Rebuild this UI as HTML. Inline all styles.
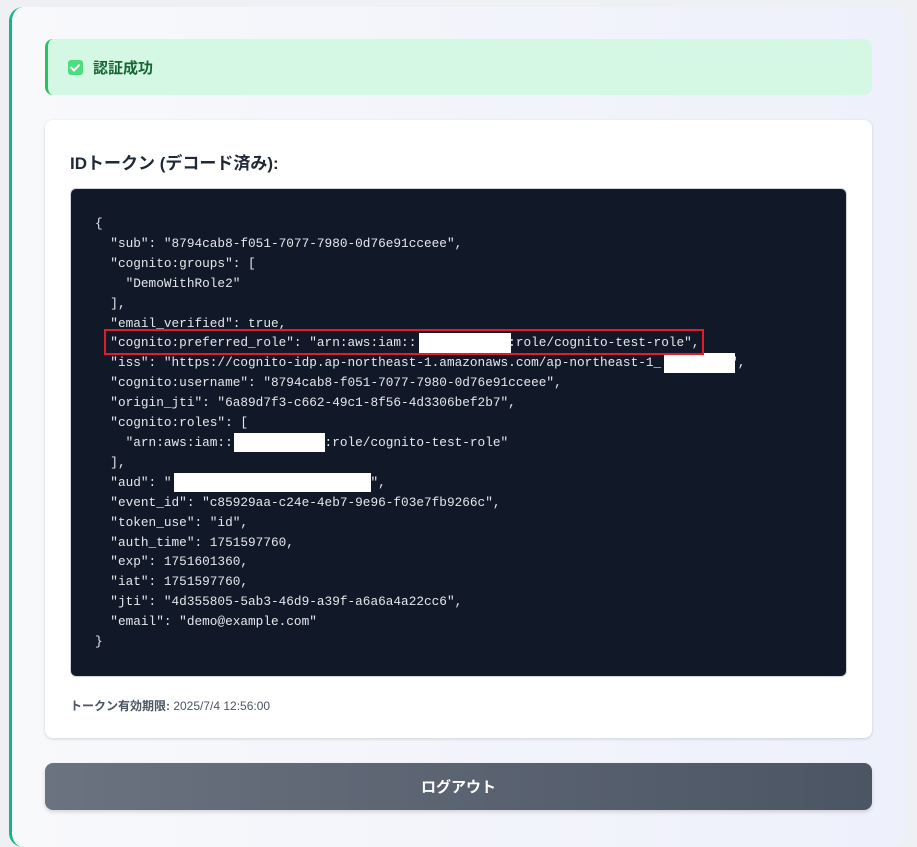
<!DOCTYPE html>
<html><head><meta charset="utf-8"><style>
*{box-sizing:border-box;margin:0;padding:0}
body{width:917px;height:828px;overflow:hidden;background:#eef0f3;font-family:"Liberation Sans","Noto Sans CJK JP",sans-serif;position:relative}
.main{position:absolute;left:9px;top:7px;width:896px;height:840px;border-radius:14px;background:linear-gradient(90deg,#f8f9fb,#eef0fb);border-left:3px solid #10b981}
.ok{position:absolute;left:45px;top:39px;width:827px;height:56px;border-radius:8px;background:#d5f8e4;border-left:3px solid #22c55e;display:flex;align-items:center;padding-left:20px;color:#166534;font-weight:bold;font-size:15px}
.chk{width:15px;height:15px;border-radius:3px;background:#4ade80;margin-right:10px;position:relative}
.chk:after{content:"";position:absolute;left:4px;top:2px;width:4px;height:7px;border:solid #fff;border-width:0 2px 2px 0;transform:rotate(45deg)}
.card{position:absolute;left:45px;top:120px;width:827px;height:618px;border-radius:8px;background:#fff;box-shadow:0 1px 3px rgba(0,0,0,.15)}
h2{position:absolute;left:25px;top:29px;font-size:17px;color:#1f2937;font-weight:bold}
.code{position:absolute;left:25px;top:68px;width:777px;height:489px;border-radius:6px;background:#111827;border:1px solid #d1d5db}
pre{position:absolute;left:24px;top:25px;font-family:"Liberation Mono",monospace;font-size:12.75px;line-height:19.9px;color:#e5e7eb}
.r{position:absolute;background:#fff}
.exp{position:absolute;left:25px;top:577px;font-size:12px;color:#4b5563}
.btn{position:absolute;left:45px;top:763px;width:827px;height:47px;border-radius:8px;background:linear-gradient(90deg,#6b7280,#4b5563);color:#fff;font-weight:bold;font-size:15px;display:flex;align-items:center;justify-content:center;box-shadow:0 2px 4px rgba(0,0,0,.15)}
</style></head><body>
<div class="main"></div>
<div class="ok"><span class="chk"></span>認証成功</div>
<div class="card">
<h2>IDトークン (デコード済み):</h2>
<div class="code"><pre>{
  "sub": "8794cab8-f051-7077-7980-0d76e91cceee",
  "cognito:groups": [
    "DemoWithRole2"
  ],
  "email_verified": true,
  "cognito:preferred_role": "arn:aws:iam::            :role/cognito-test-role",
  "iss": "https://cognito-idp.ap-northeast-1.amazonaws.com/ap-northeast-1_         ",
  "cognito:username": "8794cab8-f051-7077-7980-0d76e91cceee",
  "origin_jti": "6a89d7f3-c662-49c1-8f56-4d3306bef2b7",
  "cognito:roles": [
    "arn:aws:iam::            :role/cognito-test-role"
  ],
  "aud": "                          ",
  "event_id": "c85929aa-c24e-4eb7-9e96-f03e7fb9266c",
  "token_use": "id",
  "auth_time": 1751597760,
  "exp": 1751601360,
  "iat": 1751597760,
  "jti": "4d355805-5ab3-46d9-a39f-a6a6a4a22cc6",
  "email": "demo@example.com"
}</pre></div>
<div class="exp"><b>トークン有効期限:</b> 2025/7/4 12:56:00</div>
</div>
<div class="r" style="left:419px;top:333px;width:92px;height:20px"></div>
<div class="r" style="left:664px;top:353px;width:71px;height:20px"></div>
<div class="r" style="left:234px;top:433px;width:91px;height:19px"></div>
<div class="r" style="left:174px;top:473px;width:197px;height:19px"></div>
<div style="position:absolute;left:104px;top:329px;width:600px;height:26px;border:2px solid #e11d2a"></div>
<div class="btn">ログアウト</div>
</body></html>
